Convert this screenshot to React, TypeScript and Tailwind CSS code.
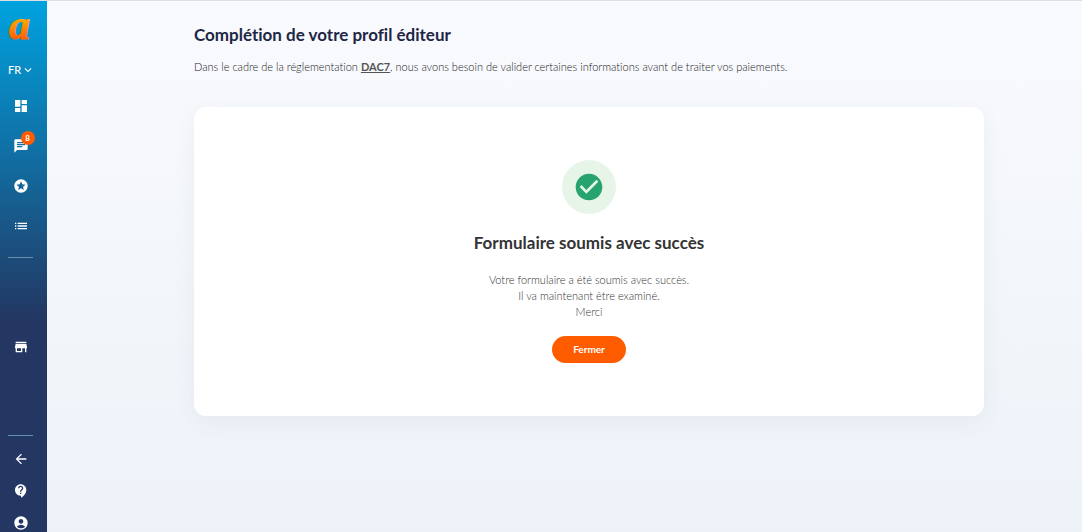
import type { ReactNode } from "react";
import {
  MdAccountCircle,
  MdArrowBack,
  MdChat,
  MdCheckCircle,
  MdContactSupport,
  MdDashboard,
  MdExpandMore,
  MdList,
  MdStars,
  MdStore,
} from "react-icons/md";

type NavItemProps = {
  label: string;
  children: ReactNode;
  compact?: boolean;
};

const NavItem = ({ label, children, compact }: NavItemProps) => (
  <a
    href="#"
    aria-label={label}
    className={`flex w-full shrink-0 items-center justify-center ${compact ? "h-8" : "h-10"}`}
  >
    {children}
  </a>
);

const Divider = () => <hr className="w-full shrink-0 border-[#6593ae]" />;

const Logo = () => (
  <svg viewBox="0 0 44 48" className="h-12 w-11 overflow-visible" aria-hidden="true">
    <defs>
      <linearGradient id="logo" x1="0" y1="16" x2="0" y2="38" gradientUnits="userSpaceOnUse">
        <stop offset="0" stopColor="#ffb000" />
        <stop offset="1" stopColor="#ff5f00" />
      </linearGradient>
    </defs>
    <text
      x="9"
      y="38"
      fill="url(#logo)"
      stroke="url(#logo)"
      strokeWidth="1"
      className="font-['Liberation_Serif'] text-[42px] leading-none font-bold italic"
    >
      a
    </text>
  </svg>
);

const SideBar = () => {
  return (
    <aside className="flex w-[47px] shrink-0 flex-col bg-linear-to-b/srgb from-[#00a2df] to-[#233762] to-60% pr-[14px] pl-2 text-white">
      <a href="/" aria-label="Accueil" className="-mx-2 block shrink-0">
        <Logo />
      </a>
      <button className="mt-[11px] flex h-5 shrink-0 items-center text-[11px] font-medium">
        FR
        <MdExpandMore size={14} className="shrink-0" />
      </button>

      <nav className="mt-[6px] mb-[11px]">
        <NavItem label="Tableau de bord">
          <MdDashboard size={16} />
        </NavItem>
        <NavItem label="Messages">
          <span className="relative block">
            <MdChat size={16} />
            <span className="absolute -top-[7px] left-2 flex size-[14px] items-center justify-center rounded-full bg-[#ff5c00] text-[8px] font-bold">
              8
            </span>
          </span>
        </NavItem>
        <NavItem label="Favoris">
          <MdStars size={16} />
        </NavItem>
        <NavItem label="Liste">
          <MdList size={16} />
        </NavItem>
      </nav>
      <Divider />

      <nav className="mt-[69px] mb-[68px]">
        <NavItem label="Boutique">
          <MdStore size={16} />
        </NavItem>
      </nav>
      <Divider />

      <nav className="mt-[7px]">
        <NavItem label="Retour" compact>
          <MdArrowBack size={16} />
        </NavItem>
        <NavItem label="Aide" compact>
          <MdContactSupport size={16} />
        </NavItem>
        <NavItem label="Compte" compact>
          <MdAccountCircle size={16} />
        </NavItem>
      </nav>
    </aside>
  );
};

const SuccessCard = () => {
  return (
    <section className="mt-8 flex flex-col items-center rounded-xl bg-white px-6 py-[53px] text-center shadow-[0_6px_24px_rgba(40,60,80,0.06)]">
      <div className="flex size-[54px] items-center justify-center rounded-full bg-[#e7f5e9]">
        <MdCheckCircle size={32} className="text-[#26a36f]" />
      </div>
      <h2 className="mt-[17px] text-[17px] leading-6 font-bold text-[#333333]">
        Formulaire soumis avec succès
      </h2>
      <p className="mt-[17px] text-[11px] leading-4 font-light text-[#333333]">
        Votre formulaire a été soumis avec succès.
        <br />
        Il va maintenant être examiné.
        <br />
        Merci
      </p>
      <button className="mt-4 h-[27px] rounded-full bg-[#ff5c00] px-[21px] text-[10px] font-bold text-white">
        Fermer
      </button>
    </section>
  );
};

const App = () => {
  return (
    <div className="flex h-screen overflow-hidden border-t border-[#dddfe3] font-[Lato,sans-serif] [font-variant-ligatures:none]">
      <SideBar />
      <main className="min-w-0 flex-1 overflow-auto bg-linear-to-b from-[#f9fafe] via-[#f2f6fa] via-60% to-[#edf2f9] pt-[22px] pr-[98px] pl-[147px]">
        <h1 className="text-[17px] leading-6 font-bold text-[#1d2745]">
          Complétion de votre profil éditeur
        </h1>
        <p className="mt-3 text-[11px] leading-4 font-light text-[#222222]">
          Dans le cadre de la réglementation{" "}
          <a href="#" className="font-bold text-[#555555] underline">
            DAC7
          </a>
          , nous avons besoin de valider certaines informations avant de traiter
          vos paiements.
        </p>
        <SuccessCard />
      </main>
    </div>
  );
};

export default App;
